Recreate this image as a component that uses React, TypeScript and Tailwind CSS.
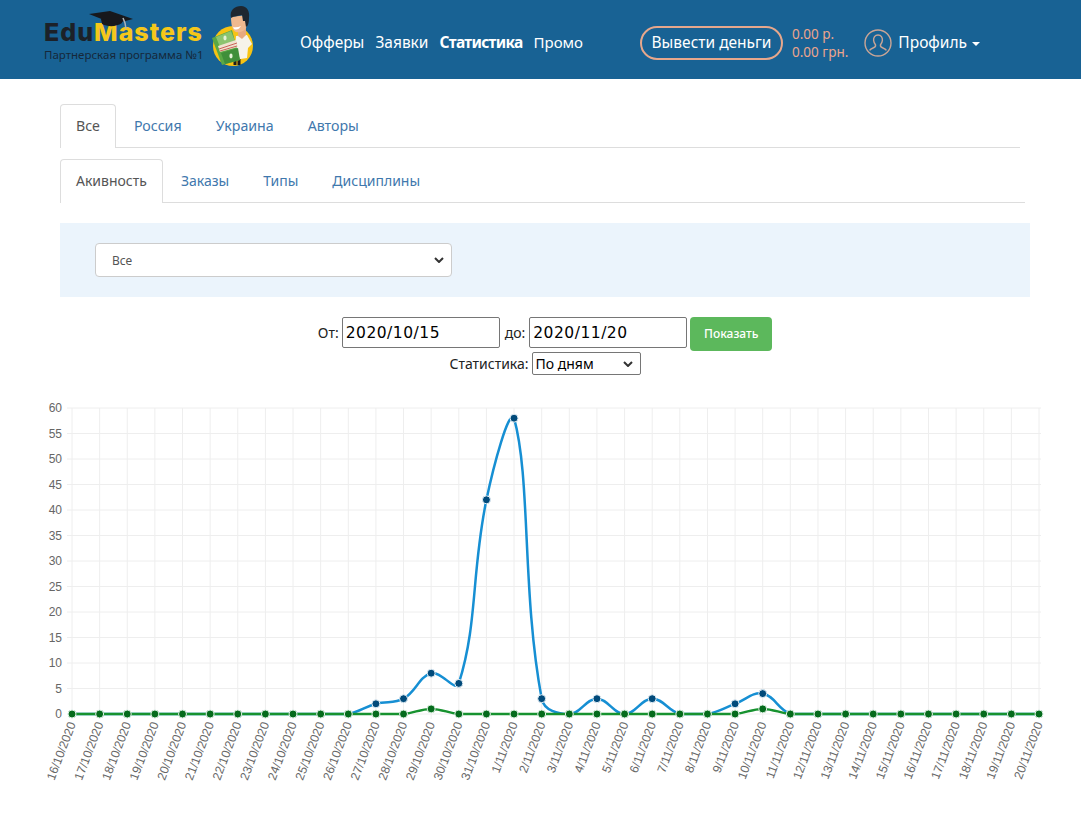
const dates = [
  '16/10/2020', '17/10/2020', '18/10/2020', '19/10/2020', '20/10/2020', '21/10/2020',
  '22/10/2020', '23/10/2020', '24/10/2020', '25/10/2020', '26/10/2020', '27/10/2020',
  '28/10/2020', '29/10/2020', '30/10/2020', '31/10/2020', '1/11/2020', '2/11/2020',
  '3/11/2020', '4/11/2020', '5/11/2020', '6/11/2020', '7/11/2020', '8/11/2020',
  '9/11/2020', '10/11/2020', '11/11/2020', '12/11/2020', '13/11/2020', '14/11/2020',
  '15/11/2020', '16/11/2020', '17/11/2020', '18/11/2020', '19/11/2020', '20/11/2020',
];

const blue = dates.map(() => 0);
[[11, 2], [12, 3], [13, 8], [14, 6], [15, 42], [16, 58], [17, 3], [19, 3], [21, 3], [24, 2], [25, 4]].forEach(([i, v]) => {
  blue[i] = v;
});
const green = dates.map((_, i) => (i === 13 || i === 25 ? 1 : 0));

const left = 72;
const right = 1039;
const top = 407;
const bottom = 713;
const xAt = (i: number) => left + (i * (right - left)) / 35;
const yAt = (v: number) => bottom - (v * (bottom - top)) / 60;

// same spline as chart.js line tension 0.4, capped to the chart area
function linePath(values: number[]) {
  const pts = values.map((v, i) => ({ x: xAt(i), y: yAt(v) }));
  const cps = pts.map((p, i) => {
    const a = pts[Math.max(i - 1, 0)];
    const b = pts[Math.min(i + 1, pts.length - 1)];
    const d1 = Math.hypot(p.x - a.x, p.y - a.y);
    const d2 = Math.hypot(b.x - p.x, b.y - p.y);
    const total = d1 + d2 || 1;
    const dx = b.x - a.x;
    const dy = b.y - a.y;
    const clamp = (y: number) => Math.min(Math.max(y, top), bottom);
    return {
      px: p.x - (0.4 * d1 * dx) / total,
      py: clamp(p.y - (0.4 * d1 * dy) / total),
      nx: p.x + (0.4 * d2 * dx) / total,
      ny: clamp(p.y + (0.4 * d2 * dy) / total),
    };
  });
  let d = `M${pts[0].x} ${pts[0].y}`;
  for (let i = 1; i < pts.length; i++) {
    d += ` C${cps[i - 1].nx} ${cps[i - 1].ny} ${cps[i].px} ${cps[i].py} ${pts[i].x} ${pts[i].y}`;
  }
  return d;
}

function Chart() {
  const ticks = [0, 5, 10, 15, 20, 25, 30, 35, 40, 45, 50, 55, 60];
  return (
    <svg viewBox="0 392 1081 408" className="mt-[18px] block h-[408px] w-[1081px]">
      {ticks.map((t) => (
        <g key={t}>
          <line x1={left - 5} x2={right + 2} y1={yAt(t)} y2={yAt(t)} stroke="#eeeeee" />
          <text
            x={left - 10}
            y={yAt(t) + 4}
            textAnchor="end"
            fontSize="12"
            fill="#666"
            fontFamily="'Liberation Sans', sans-serif"
          >
            {t}
          </text>
        </g>
      ))}
      {dates.map((d, i) => (
        <g key={d}>
          <line x1={xAt(i)} x2={xAt(i)} y1={top} y2={bottom + 5} stroke="#eeeeee" />
          <text
            transform={`translate(${xAt(i) + 4} 723) rotate(-69)`}
            textAnchor="end"
            fontSize="12.2"
            fill="#666"
            fontFamily="'Liberation Sans', sans-serif"
          >
            {d}
          </text>
        </g>
      ))}
      <path d={linePath(blue)} fill="none" stroke="#168fd3" strokeWidth="2.5" />
      {blue.map((v, i) => (
        <circle key={i} cx={xAt(i)} cy={yAt(v)} r="4" fill="#014a7a" stroke="#e6f1f8" strokeWidth="1" />
      ))}
      <path d={linePath(green)} fill="none" stroke="#17922f" strokeWidth="2.5" />
      {green.map((v, i) => (
        <circle key={i} cx={xAt(i)} cy={yAt(v)} r="4" fill="#056b1c" stroke="#e0f2e4" strokeWidth="1" />
      ))}
    </svg>
  );
}

function Mascot() {
  return (
    <svg viewBox="208 2 50 66" className="h-[66px] w-[50px] shrink-0">
      <ellipse cx="233" cy="46" rx="20" ry="20" fill="#f7c313" />
      <rect x="233.5" y="59" width="3" height="6" fill="#1d1d1d" />
      <rect x="237.5" y="59" width="3" height="6" fill="#1d1d1d" />
      <path d="M236 36 L247 35 L252 44 L248 48 L247 58 L234 60 Z" fill="#f6f3ea" />
      <path d="M238 28 h8 v7 l-4 4 -4 -3 Z" fill="#e7a97f" />
      <path d="M231 17 L247 15 L247 25 C246 31 240 33 236 32 C233 31 231 26 231 17 Z" fill="#f0b98f" />
      <path d="M231 18 C229 10 235 6 241 6 C247 6 250 11 249 18 C249 23 248 26 246 27 L245 21 L243 21 L242 15 C238 16 234 16 231 18 Z" fill="#1e2730" />
      <path d="M233 27 q4 1 8 -1 q-3 5 -7 3 Z" fill="#fff" />
      <path d="M212 38 L232 30 L240 60 L222 65 Z" fill="#5aa845" />
      <path d="M216 37 L231 31 L235 41 L220 47 Z" fill="#8cc46f" />
      <path d="M218 46 L236 40 L238 47 L220 52 Z" fill="#efe3d0" />
      <path d="M219 49 L237 43 M220 51 L237 46" stroke="#c2413a" strokeWidth="0.8" />
      <path d="M221 53 L238 48 L240 60 L225 64 Z" fill="#3f8f3a" />
      <ellipse cx="225" cy="38" rx="1.6" ry="2.4" fill="#e5f2d8" />
      <ellipse cx="231" cy="56" rx="1.6" ry="2.4" fill="#e5f2d8" />
    </svg>
  );
}

function Logo() {
  return (
    <div className="-mt-[6px] flex w-[300px] shrink-0 items-center self-start pl-[44px] pt-[2px]">
      <div className="relative mt-[10px] w-[164px]">
        <svg viewBox="0 0 46 24" className="absolute left-[44px] top-[-7px] h-[24px] w-[46px]">
          <path d="M13 9 L35 8 L34 13 C28 17 20 17 14 14 Z" fill="#17181c" />
          <path d="M1 4 L22 1 L45 9 L26 14 Z" fill="#17181c" />
          <path d="M35 8 L37 13 L38 19" fill="none" stroke="#aeb4b8" strokeWidth="1.5" />
        </svg>
        <div className="text-[25px] font-extrabold leading-[30px] tracking-[1px] [font-family:Inter,sans-serif]">
          <span className="text-[#1c2128]">Edu</span>
          <span className="text-[#f5c71a]">Masters</span>
        </div>
        <div className="whitespace-nowrap text-[11.5px] leading-[16px] text-[#16283a] [font-family:'Noto_Sans',sans-serif]">
          Партнерская программа №1
        </div>
      </div>
      <Mascot />
    </div>
  );
}

function Header() {
  return (
    <header className="flex h-[79px] items-center bg-[#186294] pt-[6px] text-white [font-family:'Noto_Sans',sans-serif]">
      <Logo />
      <nav className="flex items-center gap-[11px] text-[15.5px]">
        <a>Офферы</a>
        <a>Заявки</a>
        <a className="font-bold tracking-[-0.7px]">Статистика</a>
        <a className="text-[15px]">Промо</a>
      </nav>
      <button className="ml-[57px] flex h-[34px] w-[143px] items-center justify-center rounded-full border-2 border-[#e6a78c] text-[15.5px]">
        Вывести деньги
      </button>
      <div className="ml-[9px] text-[13.5px] leading-[18px] text-[#eda58c]">
        <div>0.00 р.</div>
        <div>0.00 грн.</div>
      </div>
      <svg viewBox="0 0 28 28" className="ml-[16px] h-[28px] w-[28px]" fill="none" stroke="#c9a596" strokeWidth="1.4">
        <circle cx="14" cy="14" r="13" />
        <path d="M14 6 C10.8 6 9.4 8.6 9.6 11.4 C9.8 13.6 10.8 15 11.6 16 C11.8 17.6 10.8 18.4 9 19 C7.6 19.5 6.4 20 5.6 21.4 M14 6 C17.2 6 18.6 8.6 18.4 11.4 C18.2 13.6 17.2 15 16.4 16 C16.2 17.6 17.2 18.4 19 19 C20.4 19.5 21.6 20 22.4 21.4" />
      </svg>
      <div className="ml-[6px] flex items-center gap-[5px] text-[15.5px]">
        Профиль
        <span className="mt-[2px] border-x-[4px] border-t-[4px] border-x-transparent border-t-white" />
      </div>
    </header>
  );
}

function Tabs({ items, width, size }: { items: string[]; width: string; size: string }) {
  return (
    <ul className={`flex h-[44px] gap-[2px] border-b border-[#dddddd] ${width} ${size}`}>
      {items.map((item, i) => (
        <li
          key={item}
          className={
            i === 0
              ? 'h-[44px] rounded-t border border-b-0 border-[#dddddd] bg-white px-[15px] leading-[42px] text-[#555555]'
              : 'h-[44px] border border-transparent px-[15px] leading-[42px] text-[#3f78ad]'
          }
        >
          {item}
        </li>
      ))}
    </ul>
  );
}

function Select({ label, className }: { label: string; className: string }) {
  return (
    <div className="relative w-fit">
      <select className={`block appearance-none bg-white ${className}`}>
        <option>{label}</option>
      </select>
      <svg viewBox="0 0 10 6" className="absolute right-[8px] top-1/2 h-[6px] w-[10px] -translate-y-1/2" fill="none" stroke="#333333" strokeWidth="2">
        <path d="M1 1 L5 5 L9 1" />
      </svg>
    </div>
  );
}

export default function App() {
  return (
    <div className="min-h-[814px] bg-white text-[14px] [font-family:'Noto_Sans',sans-serif]">
      <Header />
      <main className="pt-[25px]">
        <div className="mx-[60px] w-[970px]">
          <Tabs items={['Все', 'Россия', 'Украина', 'Авторы']} width="w-[960px]" size="text-[14.2px]" />
          <div className="mt-[11px]">
            <Tabs items={['Акивность', 'Заказы', 'Типы', 'Дисциплины']} width="w-[965px]" size="text-[14px]" />
          </div>
          <div className="mt-[20px] bg-[#ebf4fc] px-[35px] py-[20px]">
            <Select label="Все" className="h-[34px] w-[357px] rounded border border-[#cccccc] px-[16px] pt-[2px] text-[12px] text-[#555555]" />
          </div>
          <form className="mt-[20px] flex flex-col items-center gap-[1px] text-[#222222]">
            <div className="flex items-start">
              <label className="leading-[31px]">От:</label>
              <input
                readOnly
                value="2020/10/15"
                className="ml-[3px] h-[31px] w-[158px] rounded-[2px] border border-[#767676] px-[3px] text-[15.5px] tracking-[0.5px] text-black [font-family:'DejaVu_Sans',sans-serif]"
              />
              <label className="ml-[5px] leading-[32px]">до:</label>
              <input
                readOnly
                value="2020/11/20"
                className="ml-[4px] h-[31px] w-[158px] rounded-[2px] border border-[#767676] px-[3px] text-[15.5px] tracking-[0.5px] text-black [font-family:'DejaVu_Sans',sans-serif]"
              />
              <button type="button" className="ml-[3px] h-[34px] w-[82px] rounded bg-[#5cb85c] text-[12px] font-medium text-white">
                Показать
              </button>
            </div>
            <div className="flex items-center">
              <label>Статистика:</label>
              <div className="ml-[3px]">
                <Select label="По дням" className="h-[23px] w-[109px] rounded-[2px] border border-[#767676] px-[3px] text-[14px] text-black" />
              </div>
            </div>
          </form>
        </div>
        <Chart />
      </main>
    </div>
  );
}
